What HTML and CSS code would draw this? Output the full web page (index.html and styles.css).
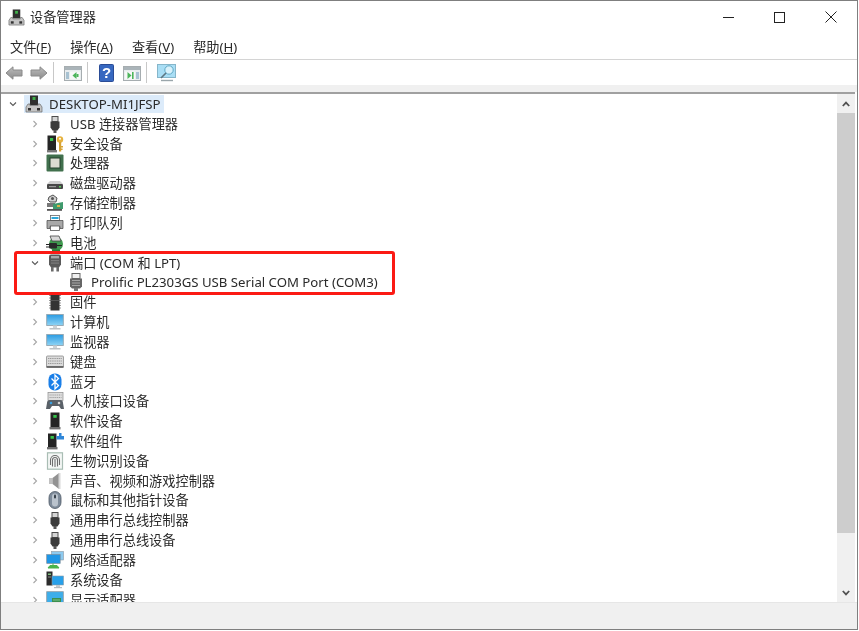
FILE: index.html
```html
<!DOCTYPE html>
<html lang="zh-CN">
<head>
<meta charset="utf-8">
<title>设备管理器</title>
<link rel="stylesheet" href="styles.css">
</head>
<body>
<svg class="sprite" width="0" height="0" aria-hidden="true">
  <defs>
    <linearGradient id="g-screen" x1="0" y1="0" x2="0" y2="1"><stop offset="0" stop-color="#2a9be2"/><stop offset="1" stop-color="#8fd4f5"/></linearGradient>
    <linearGradient id="g-arrow" x1="0" y1="0" x2="0" y2="1"><stop offset="0" stop-color="#bcbcbc"/><stop offset="1" stop-color="#8c8c8c"/></linearGradient>
    <symbol id="i-pc" viewBox="0 0 18 18">
      <rect x="5" y="0.5" width="8" height="9.5" fill="#2f2f2f"/><rect x="7.5" y="2" width="3" height="3" fill="#3fae49"/>
      <path d="M3 9h2v1.5h8V9h2l2 3v5H1v-5z" fill="#c4c4c4" stroke="#6a6a6a" stroke-width=".7"/>
      <rect x="3" y="13" width="3" height="2.5" fill="#333"/><rect x="12" y="13" width="3" height="2.5" fill="#333"/>
    </symbol>
    <symbol id="i-usb" viewBox="0 0 18 18">
      <rect x="6" y="1.5" width="6" height="5" fill="#d4d4d4" stroke="#4c4c4c"/>
      <path d="M4.5 6.5h9v6l-2 3h-5l-2-3z" fill="#3b3b3b"/><rect x="7.5" y="15" width="3" height="3" fill="#555"/>
    </symbol>
    <symbol id="i-sec" viewBox="0 0 18 18">
      <rect x="1.5" y="0.5" width="8.5" height="15" fill="#252525"/><rect x="4" y="3" width="3.2" height="3" fill="#38c24c"/><rect x="1" y="15" width="10" height="2.4" fill="#777"/>
      <circle cx="14" cy="4.5" r="3.2" fill="#e6b23e"/><circle cx="14" cy="3.7" r="1" fill="#fff"/><rect x="13" y="7" width="2.2" height="9.5" fill="#d6a233"/><rect x="15" y="11" width="2" height="1.5" fill="#d6a233"/><rect x="15" y="13.5" width="1.6" height="1.5" fill="#d6a233"/>
    </symbol>
    <symbol id="i-cpu" viewBox="0 0 18 18">
      <rect x="0.5" y="0.5" width="17" height="17" rx="1" fill="#41704d"/><rect x="4" y="4" width="10" height="10" fill="#dbdbd0" stroke="#24402c"/>
    </symbol>
    <symbol id="i-disk" viewBox="0 0 18 18">
      <path d="M1 10l3-3h10l3 3z" fill="#cfcfcf"/><rect x="1" y="10" width="16" height="5" rx="1" fill="#474747"/><rect x="3" y="12" width="7" height="1.2" fill="#999"/><rect x="13" y="12" width="2" height="1.5" fill="#5bd05b"/>
    </symbol>
    <symbol id="i-store" viewBox="0 0 18 18">
      <path d="M3 3l4-2 4 3-1 4H4L2 6z" fill="#d0d0d0" stroke="#444" stroke-width=".9"/><circle cx="6.5" cy="4.5" r="1.5" fill="#555"/>
      <rect x="1" y="9" width="8" height="4" fill="#777"/><path d="M7 10l10-2v7H7z" fill="#3f9a6d"/><rect x="11" y="11" width="3" height="2" fill="#d8b24a"/><rect x="1" y="15" width="15" height="1.8" fill="#555"/>
    </symbol>
    <symbol id="i-print" viewBox="0 0 18 18">
      <rect x="4.5" y="1.5" width="9" height="5" fill="#fff" stroke="#666" stroke-width=".8"/><rect x="5.5" y="3" width="7" height="2" fill="#2ea7d8"/>
      <path d="M1 6.5h16v8h-3v-2H4v2H1z" fill="#a9a9a9" stroke="#444" stroke-width=".7"/><rect x="4.5" y="12" width="9" height="4.5" fill="#fff" stroke="#555" stroke-width=".8"/>
    </symbol>
    <symbol id="i-batt" viewBox="0 0 18 18">
      <circle cx="10" cy="10" r="7" fill="#3e9a4e"/><path d="M4 2l9 0 2 5H6z" fill="#d8d8d8" stroke="#444" stroke-width=".8"/>
      <rect x="3" y="9" width="8" height="5.5" rx="1" fill="#2a2a2a"/><path d="M0 10.5h3M0 13h3M11 11.5h5" stroke="#222" stroke-width="1.2"/><path d="M6 16.5h8" stroke="#2c7a3a" stroke-width="2"/>
    </symbol>
    <symbol id="i-port" viewBox="0 0 18 18">
      <path d="M3 2.5q0-2 2-2h8q2 0 2 2v8l-2 3H5l-2-3z" fill="#5a5a5a"/>
      <rect x="5" y="2" width="8" height="2.4" fill="#a8a8a8"/><rect x="5" y="6" width="8" height="1.2" fill="#7c7c7c"/><rect x="5" y="8.5" width="8" height="1.2" fill="#7c7c7c"/>
      <rect x="5" y="13" width="2.6" height="4.5" fill="#6a6a6a"/><rect x="10.4" y="13" width="2.6" height="4.5" fill="#6a6a6a"/>
    </symbol>
    <symbol id="i-port2" viewBox="0 0 18 18">
      <rect x="5" y="0.5" width="8" height="5" fill="#f0f0f0" stroke="#666"/>
      <path d="M3 5.5h12v8l-2 2H5l-2-2z" fill="#666"/>
      <path d="M5 7.5h8M5 10h8M5 12.5h8" stroke="#a6a6a6"/>
      <rect x="7" y="15" width="4" height="3" fill="#777"/>
    </symbol>
    <symbol id="i-fw" viewBox="0 0 18 18">
      <path d="M3 2.5h12M3 5h12M3 7.5h12M3 10h12M3 12.5h12M3 15h12" stroke="#9a9a9a"/>
      <rect x="4.5" y="0.5" width="9" height="17" fill="#333"/><rect x="5" y="7" width="8" height="1" fill="#555"/>
      <path d="M7.5.5a1.5 1.5 0 0 0 3 0z" fill="#ddd"/>
    </symbol>
    <symbol id="i-mon" viewBox="0 0 18 18">
      <rect x="0.7" y="1.5" width="16.6" height="11" fill="url(#g-screen)" stroke="#93a5b0" stroke-width=".9"/>
      <rect x="7" y="12.5" width="4" height="2.5" fill="#cdd3d7"/><rect x="3.5" y="15" width="11" height="1.5" fill="#bcc2c6"/>
    </symbol>
    <symbol id="i-kbd" viewBox="0 0 18 18">
      <rect x="0.5" y="3" width="17" height="11.5" rx="1" fill="#dcdcdc" stroke="#8c8c8c" stroke-width=".8"/>
      <path d="M2 5.5h14M2 8h14M2 10.5h14" stroke="#9a9a9a" stroke-width="1.1" stroke-dasharray="1.2 .6"/><rect x="0.5" y="13" width="17" height="1.8" fill="#6a6a6a"/>
    </symbol>
    <symbol id="i-bt" viewBox="0 0 18 18">
      <rect x="2.5" y="0.5" width="13" height="17" rx="6" fill="#1a7fe8"/><path d="M5.5 5.5l7 7-3.5 3.5V2l3.5 3.5-7 7" fill="none" stroke="#fff" stroke-width="1.3"/>
    </symbol>
    <symbol id="i-hid" viewBox="0 0 18 18">
      <rect x="2" y="0.5" width="15" height="8" fill="#dedede" stroke="#8c8c8c" stroke-width=".7"/><path d="M3.5 3h12M3.5 5.5h12" stroke="#a0a0a0" stroke-dasharray="1.2 .7"/>
      <path d="M1 11q0-3 3-3h10q3 0 3 3l1 6h-3l-2-3H6l-2 3H0z" fill="#5a6168"/><circle cx="5" cy="11" r="1.3" fill="#39a0e0"/><circle cx="13" cy="11" r="1.3" fill="#d4d4d4"/>
    </symbol>
    <symbol id="i-soft" viewBox="0 0 18 18">
      <rect x="4.5" y="0.5" width="9" height="14.5" fill="#242424"/><rect x="7.3" y="3" width="3.4" height="2.8" fill="#35c24a"/><rect x="3.5" y="15" width="11" height="2.4" fill="#6e6e6e"/>
    </symbol>
    <symbol id="i-comp" viewBox="0 0 18 18">
      <rect x="2" y="1.5" width="8.5" height="13.5" fill="#242424"/><rect x="4.5" y="4" width="3.4" height="2.8" fill="#35c24a"/><rect x="1" y="15" width="10.5" height="2.4" fill="#6e6e6e"/>
      <path d="M10.5 4h2.5V1h2.5v3H18v3.5h-7.5z" fill="#2f86d8"/>
    </symbol>
    <symbol id="i-bio" viewBox="0 0 18 18">
      <rect x="1.5" y="0.8" width="15" height="16.4" fill="#f4f7f5" stroke="#a9bdb4" stroke-width="1.2"/>
      <path d="M4.5 13V8a4.5 4.5 0 0 1 9 0v5M6.5 14.5V8a2.5 2.5 0 0 1 5 0v6.5M9 7v8" fill="none" stroke="#6e6e6e" stroke-width="1.1"/>
    </symbol>
    <symbol id="i-snd" viewBox="0 0 18 18">
      <rect x="3" y="6" width="3.5" height="6" fill="#c0c0c0"/><path d="M6.5 6L13 1v16l-6.5-5z" fill="#929292"/><rect x="12.5" y="1" width="2" height="16" fill="#d8d8d8"/>
    </symbol>
    <symbol id="i-mouse" viewBox="0 0 18 18">
      <rect x="3" y="0.5" width="12" height="17" rx="6" fill="#7f8c9b" stroke="#4e5966" stroke-width=".8"/><rect x="6" y="2.5" width="6" height="13" rx="3" fill="#bac3cd"/><rect x="8" y="3.5" width="2" height="4" rx="1" fill="#39424c"/>
    </symbol>
    <symbol id="i-net" viewBox="0 0 18 18">
      <rect x="5.5" y="0.5" width="12" height="8.5" fill="#8ccaf0" stroke="#8d9aa3" stroke-width=".6"/>
      <rect x="0.7" y="3.5" width="13.5" height="9" fill="#1f96e6" stroke="#7c8a94" stroke-width=".6"/>
      <path d="M7 12.5v2M2 17l2-2.5h7L13 17z" stroke="#49b34c" fill="#49b34c"/>
    </symbol>
    <symbol id="i-sys" viewBox="0 0 18 18">
      <rect x="0.5" y="0.5" width="6" height="14" fill="#2c2c2c"/><rect x="2" y="2.5" width="3" height="1.5" fill="#7fbf7f"/><rect x="2" y="5.5" width="3" height="1" fill="#888"/>
      <rect x="6" y="5" width="11.5" height="9" fill="#27a0ea" stroke="#8d9aa3" stroke-width=".6"/><rect x="10" y="14" width="4" height="2" fill="#c2c8cc"/><rect x="8" y="16" width="8" height="1.2" fill="#b5bbbf"/>
    </symbol>
    <symbol id="i-disp" viewBox="0 0 18 18">
      <rect x="0.7" y="0.7" width="16.6" height="12" fill="#3daeea" stroke="#8d9aa3" stroke-width=".8"/><path d="M6 7h9v7H6z" fill="#3b8f4e"/><path d="M7 9h7M7 11.5h7" stroke="#7cc48a"/>
    </symbol>
    <symbol id="chev" viewBox="0 0 8 8"><path d="M2.5 1l3 3-3 3" fill="none" stroke="#a6a6a6" stroke-width="1.1"/></symbol>
    <symbol id="chev-d" viewBox="0 0 8 8"><path d="M1 2.5l3 3 3-3" fill="none" stroke="#595959" stroke-width="1.1"/></symbol>
  </defs>
</svg>

<div class="window">
  <header class="titlebar">
    <svg class="title-icon"><use href="#i-pc"/></svg>
    <span class="title-text">设备管理器</span>
    <div class="controls">
      <span class="ctl"><i class="ctl-min"></i></span>
      <span class="ctl"><i class="ctl-max"></i></span>
      <span class="ctl">
        <svg class="ctl-x" viewBox="0 0 12 12"><path d="M.5.5l11 11M11.5.5l-11 11" stroke="#222" fill="none"/></svg>
      </span>
    </div>
  </header>

  <nav class="menubar">
    <span class="menu">文件(<u>F</u>)</span>
    <span class="menu">操作(<u>A</u>)</span>
    <span class="menu">查看(<u>V</u>)</span>
    <span class="menu">帮助(<u>H</u>)</span>
  </nav>

  <div class="toolbar">
    <svg class="tb-arrow" viewBox="0 0 18 14"><path d="M1 7l7-6.2V4h9v6H8v3.2z" fill="url(#g-arrow)" stroke="#8a8a8a"/></svg>
    <svg class="tb-arrow" viewBox="0 0 18 14"><path d="M17 7l-7-6.2V4H1v6h9v3.2z" fill="url(#g-arrow)" stroke="#8a8a8a"/></svg>
    <span class="tb-sep"></span>
    <svg class="tb-win" viewBox="0 0 18 15"><rect x=".5" y=".5" width="17" height="14" fill="#e9edef" stroke="#a6adb0"/><rect x="1" y="1" width="16" height="3" fill="#aab4b9"/><rect x="2" y="6" width="3" height="7" fill="#a8c2d2"/><rect x="6" y="5.5" width="10" height="8" fill="#f7f8f8"/><path d="M12.5 6v7L8.5 9.5z" fill="#4cb45a"/><rect x="12.5" y="8" width="2" height="3" fill="#4cb45a"/></svg>
    <span class="tb-sep"></span>
    <svg class="tb-help" viewBox="0 0 15 18"><rect x=".5" y=".5" width="14" height="17" rx="1" fill="#3768c0" stroke="#2a4c96"/><text x="7.5" y="14" class="tb-q">?</text></svg>
    <svg class="tb-win" viewBox="0 0 18 15"><rect x=".5" y=".5" width="17" height="14" fill="#e9edef" stroke="#a6adb0"/><rect x="1" y="1" width="16" height="3" fill="#aab4b9"/><rect x="2" y="5.5" width="10" height="8" fill="#f7f8f8"/><path d="M4.5 6v7l4-3.5z" fill="#4cb45a"/><rect x="9" y="6" width="1.6" height="7" fill="#4cb45a"/><rect x="13" y="6" width="3" height="7" fill="#a8c2d2"/></svg>
    <span class="tb-sep"></span>
    <svg class="tb-scan" viewBox="0 0 19 18"><rect x=".5" y=".5" width="18" height="13" fill="#a9def5" stroke="#86b6ca"/><circle cx="12" cy="6" r="4.2" fill="#d8f1fb" stroke="#5fa9c6"/><path d="M9 9l-5 5" stroke="#5e7580" stroke-width="1.6"/><path d="M4 16.5h12" stroke="#9aa6ab" stroke-width="1.4"/></svg>
  </div>

  <div class="band"></div>
  <div class="divider"></div>

  <main class="content">
    <div class="tree">
      <div class="row root">
        <svg class="chev"><use href="#chev-d"/></svg>
        <span class="root-sel"><svg class="ico"><use href="#i-pc"/></svg><span class="label">DESKTOP-MI1JFSP</span></span>
      </div>
      <div class="row"><svg class="chev"><use href="#chev"/></svg><svg class="ico"><use href="#i-usb"/></svg><span class="label">USB 连接器管理器</span></div>
      <div class="row"><svg class="chev"><use href="#chev"/></svg><svg class="ico"><use href="#i-sec"/></svg><span class="label">安全设备</span></div>
      <div class="row"><svg class="chev"><use href="#chev"/></svg><svg class="ico"><use href="#i-cpu"/></svg><span class="label">处理器</span></div>
      <div class="row"><svg class="chev"><use href="#chev"/></svg><svg class="ico"><use href="#i-disk"/></svg><span class="label">磁盘驱动器</span></div>
      <div class="row"><svg class="chev"><use href="#chev"/></svg><svg class="ico"><use href="#i-store"/></svg><span class="label">存储控制器</span></div>
      <div class="row"><svg class="chev"><use href="#chev"/></svg><svg class="ico"><use href="#i-print"/></svg><span class="label">打印队列</span></div>
      <div class="row"><svg class="chev"><use href="#chev"/></svg><svg class="ico"><use href="#i-batt"/></svg><span class="label">电池</span></div>
      <div class="row"><svg class="chev"><use href="#chev-d"/></svg><svg class="ico"><use href="#i-port"/></svg><span class="label">端口 (COM 和 LPT)</span></div>
      <div class="row child"><svg class="ico"><use href="#i-port2"/></svg><span class="label">Prolific PL2303GS USB Serial COM Port (COM3)</span></div>
      <div class="row"><svg class="chev"><use href="#chev"/></svg><svg class="ico"><use href="#i-fw"/></svg><span class="label">固件</span></div>
      <div class="row"><svg class="chev"><use href="#chev"/></svg><svg class="ico"><use href="#i-mon"/></svg><span class="label">计算机</span></div>
      <div class="row"><svg class="chev"><use href="#chev"/></svg><svg class="ico"><use href="#i-mon"/></svg><span class="label">监视器</span></div>
      <div class="row"><svg class="chev"><use href="#chev"/></svg><svg class="ico"><use href="#i-kbd"/></svg><span class="label">键盘</span></div>
      <div class="row"><svg class="chev"><use href="#chev"/></svg><svg class="ico"><use href="#i-bt"/></svg><span class="label">蓝牙</span></div>
      <div class="row"><svg class="chev"><use href="#chev"/></svg><svg class="ico"><use href="#i-hid"/></svg><span class="label">人机接口设备</span></div>
      <div class="row"><svg class="chev"><use href="#chev"/></svg><svg class="ico"><use href="#i-soft"/></svg><span class="label">软件设备</span></div>
      <div class="row"><svg class="chev"><use href="#chev"/></svg><svg class="ico"><use href="#i-comp"/></svg><span class="label">软件组件</span></div>
      <div class="row"><svg class="chev"><use href="#chev"/></svg><svg class="ico"><use href="#i-bio"/></svg><span class="label">生物识别设备</span></div>
      <div class="row"><svg class="chev"><use href="#chev"/></svg><svg class="ico"><use href="#i-snd"/></svg><span class="label">声音、视频和游戏控制器</span></div>
      <div class="row"><svg class="chev"><use href="#chev"/></svg><svg class="ico"><use href="#i-mouse"/></svg><span class="label">鼠标和其他指针设备</span></div>
      <div class="row"><svg class="chev"><use href="#chev"/></svg><svg class="ico"><use href="#i-usb"/></svg><span class="label">通用串行总线控制器</span></div>
      <div class="row"><svg class="chev"><use href="#chev"/></svg><svg class="ico"><use href="#i-usb"/></svg><span class="label">通用串行总线设备</span></div>
      <div class="row"><svg class="chev"><use href="#chev"/></svg><svg class="ico"><use href="#i-net"/></svg><span class="label">网络适配器</span></div>
      <div class="row"><svg class="chev"><use href="#chev"/></svg><svg class="ico"><use href="#i-sys"/></svg><span class="label">系统设备</span></div>
      <div class="row"><svg class="chev"><use href="#chev"/></svg><svg class="ico"><use href="#i-disp"/></svg><span class="label">显示适配器</span></div>
    </div>
    <div class="scrollbar">
      <span class="sb-btn"><svg class="sb-arrow" viewBox="0 0 8 6"><path d="M.8 5L4 1.6 7.2 5" fill="none" stroke="#505050" stroke-width="1.8"/></svg></span>
      <div class="sb-track"><div class="sb-thumb"></div></div>
      <span class="sb-btn"><svg class="sb-arrow" viewBox="0 0 8 6"><path d="M.8 1L4 4.4 7.2 1" fill="none" stroke="#505050" stroke-width="1.8"/></svg></span>
    </div>
  </main>

  <footer class="statusbar"></footer>
  <div class="annotation"></div>
</div>
</body>
</html>
```

FILE: styles.css
```css
* { box-sizing: border-box; }

html, body { margin: 0; height: 100%; background: #fff; }

body {
  font-family: "Noto Sans", "Noto Sans CJK SC", sans-serif;
  font-size: 13.2px;
  color: #2a2a2a;
  overflow: hidden;
}

.sprite { position: absolute; }

.window {
  position: relative;
  width: 858px;
  height: 630px;
  border: 1px solid #7f7f7f;
  display: flex;
  flex-direction: column;
  background: #fff;
  filter: blur(0.4px);
}

.titlebar {
  height: 32px;
  display: flex;
  align-items: center;
  padding: 0 1px 0 7px;
  flex: none;
}

.title-icon { width: 17px; height: 17px; margin-right: 5px; }
.title-text { padding-bottom: 1px; }

.controls { margin-left: auto; display: flex; }

.ctl {
  width: 51px;
  height: 32px;
  display: flex;
  align-items: center;
  justify-content: center;
}

.ctl-min { width: 11px; height: 1px; background: #222; }
.ctl-max { width: 11px; height: 11px; border: 1px solid #222; }
.ctl-x { width: 12px; height: 12px; }

.menubar {
  height: 27px;
  flex: none;
  display: flex;
  align-items: center;
  gap: 19px;
  padding: 0 0 0 9px;
  border-bottom: 1px solid #d4d4d4;
}

.menu u { text-underline-offset: 1px; }

.toolbar {
  height: 25px;
  flex: none;
  display: flex;
  align-items: center;
  padding-left: 4px;
}

.tb-arrow { width: 18px; height: 14px; margin-right: 7px; }
.tb-arrow + .tb-sep { margin-left: -2px; }
.tb-sep { width: 1px; height: 21px; background: #c8c8c8; }
.tb-win { width: 18px; height: 15px; margin: 2px 5px 0 10px; }
.tb-help { width: 15px; height: 18px; margin: 0 9px 0 11px; }
.tb-help + .tb-win { margin-left: 0; }
.tb-scan { width: 19px; height: 18px; margin-left: 10px; }
.tb-q { font-family: "Liberation Sans", sans-serif; font-size: 15px; font-weight: 700; fill: #fff; text-anchor: middle; }

.band {
  height: 7px;
  flex: none;
  background: #f0f0f0;
}

.divider {
  height: 2px;
  flex: none;
  margin-right: 2px;
  background: #a0a0a0;
}

.content {
  flex: 1;
  min-height: 0;
  display: flex;
  padding-right: 2px;
}

.tree { flex: 1; min-width: 0; overflow: hidden; }

.row {
  height: 19.84px;
  display: flex;
  align-items: center;
  padding-left: 30px;
  white-space: nowrap;
}

.chev { width: 8px; height: 8px; flex: none; }

.ico { width: 18px; height: 18px; flex: none; margin-left: 7px; }

.label { margin-left: 6px; padding-bottom: 1px; }

.root { padding-left: 8px; }

.root-sel {
  display: flex;
  align-items: center;
  height: 18px;
  margin-left: 7px;
  padding-right: 3px;
  background: #dcebfa;
}

.root-sel .ico { margin-left: 1px; }
.root-sel .label { margin-left: 6px; padding-bottom: 0; }

.child { padding-left: 66px; }
.child .ico { margin-left: 0; }
.child .label { margin-left: 6px; padding-bottom: 0; }

.scrollbar {
  width: 18px;
  flex: none;
  display: flex;
  flex-direction: column;
  background: #f0f0f0;
}

.sb-btn {
  height: 19px;
  flex: none;
  display: flex;
  align-items: center;
  justify-content: center;
}

.sb-arrow { width: 8px; height: 6px; }

.sb-track { flex: 1; }
.sb-thumb { height: 420px; background: #cdcdcd; }

.statusbar {
  height: 27px;
  flex: none;
  background: #f0f0f0;
  border-top: 1px solid #e6e6e6;
}

.annotation {
  position: absolute;
  left: 13px;
  top: 250px;
  width: 381px;
  height: 44px;
  border: 3px solid #fb1a14;
  border-radius: 3px;
}
```
